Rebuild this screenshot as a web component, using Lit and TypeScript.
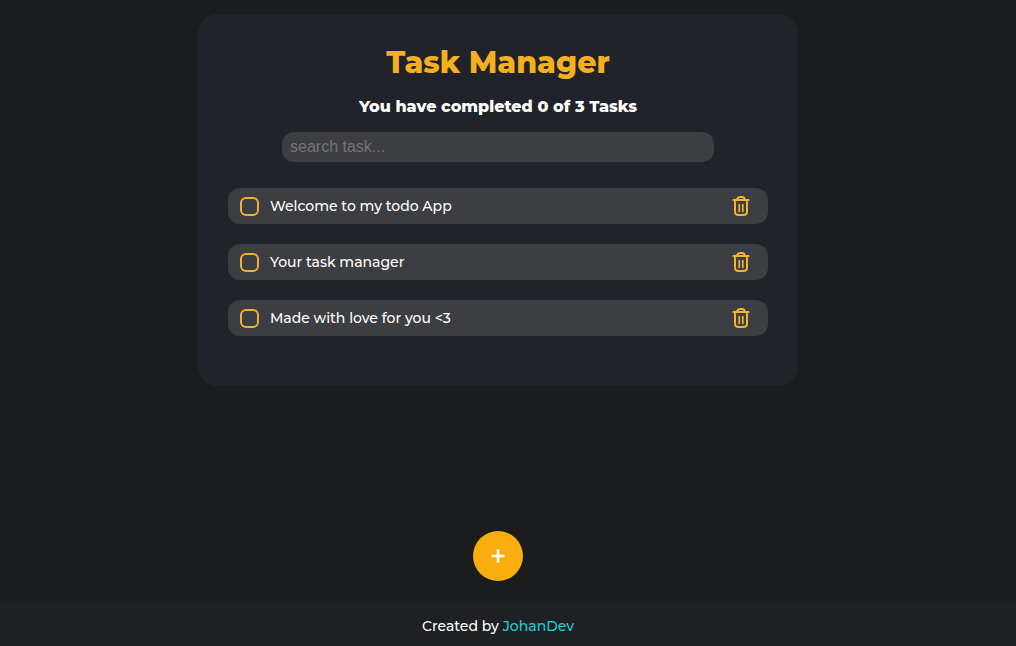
import { LitElement, html, css } from "lit";
import { customElement, property, state } from "lit/decorators.js";

interface Task {
  id: number;
  text: string;
  done: boolean;
}

@customElement("task-item")
class TaskItem extends LitElement {
  @property({ attribute: false }) task!: Task;

  static styles = css`
    :host {
      display: block;
    }
    .row {
      display: flex;
      align-items: center;
      gap: 10px;
      min-height: 36px;
      box-sizing: border-box;
      padding: 0 16px 0 12px;
      border-radius: 12px;
      background: #3d3e42;
    }
    .label {
      display: flex;
      flex: 1;
      align-items: center;
      gap: 11px;
      font-size: 14px;
      line-height: 20px;
      font-weight: 500;
      color: #fff;
      cursor: pointer;
    }
    .check {
      appearance: none;
      flex: none;
      width: 19px;
      height: 19px;
      margin: 0;
      border: 2px solid #f0b032;
      border-radius: 6px;
      cursor: pointer;
    }
    .check:checked {
      background: #f0b032;
    }
    .remove {
      display: flex;
      padding: 0;
      border: 0;
      background: none;
      color: #f0b429;
      cursor: pointer;
    }
  `;

  private emit(name: string) {
    this.dispatchEvent(new CustomEvent(name, { detail: this.task.id }));
  }

  render() {
    return html`
      <div class="row">
        <label class="label">
          <input
            class="check"
            type="checkbox"
            .checked=${this.task.done}
            @change=${() => this.emit("toggle-task")}
          />
          ${this.task.text}
        </label>
        <button class="remove" type="button" aria-label="Delete ${this.task.text}" @click=${() => this.emit("remove-task")}>
          <svg width="22" height="22" viewBox="0 0 22 22" fill="none" stroke="currentColor" stroke-width="2" stroke-linecap="round" stroke-linejoin="round">
            <path d="M3.5 5h15" />
            <path d="M7.300 5Q7.300 2 10 2h2Q14.700 2 14.700 5" />
            <path d="M5 5.500V16.500Q5 20 8.500 20h5Q17 20 17 16.500V5.500" />
            <path d="M9.200 9.500v7M12.800 9.500v7" stroke-width="1.700" />
          </svg>
        </button>
      </div>
    `;
  }
}

@customElement("app-root")
class AppRoot extends LitElement {
  @state() private tasks: Task[] = [
    { id: 1, text: "Welcome to my todo App", done: false },
    { id: 2, text: "Your task manager", done: false },
    { id: 3, text: "Made with love for you <3", done: false },
  ];
  @state() private query = "";

  static styles = css`
    :host {
      display: flex;
      flex-direction: column;
      min-height: 100vh;
      background: #1b1c1d;
      color: #fff;
      font-family: Montserrat, Inter, sans-serif;
    }
    .main {
      display: flex;
      flex: 1;
      flex-direction: column;
      align-items: center;
      padding: 14px 20px 20px 0;
    }
    .card {
      display: flex;
      flex-direction: column;
      align-items: center;
      box-sizing: border-box;
      width: 100%;
      max-width: 600px;
      padding: 30px 30px 50px;
      border-radius: 20px;
      background: #20232a;
    }
    .title {
      margin: 0;
      font-size: 30px;
      line-height: 38px;
      font-weight: 800;
      color: #f4b01e;
    }
    .summary {
      margin: 15px 0;
      font-size: 16px;
      line-height: 20px;
      font-weight: 800;
    }
    .search {
      box-sizing: border-box;
      width: 80%;
      height: 30px;
      padding: 0 8px;
      border: 0;
      border-radius: 12px;
      outline: none;
      background: #3d3e42;
      color: #fff;
      font: 16px "Liberation Sans", Arial, sans-serif;
    }
    .search::placeholder {
      color: #757575;
    }
    .list {
      display: grid;
      gap: 20px;
      width: 100%;
      margin: 26px 0 0;
      padding: 0;
      list-style: none;
    }
    .add {
      display: flex;
      align-items: center;
      justify-content: center;
      width: 50px;
      height: 50px;
      margin-top: auto;
      padding: 0;
      border: 0;
      border-radius: 50%;
      background: #f9ae0d;
      color: #fff;
      cursor: pointer;
    }
    .footer {
      padding: 15px 20px 10px 0;
      background: #1e2023;
      font-size: 14px;
      line-height: 20px;
      font-weight: 500;
      text-align: center;
    }
    .link {
      color: #1fced3;
      text-decoration: none;
    }
  `;

  private toggle(id: number) {
    this.tasks = this.tasks.map((t) => (t.id === id ? { ...t, done: !t.done } : t));
  }

  private remove(id: number) {
    this.tasks = this.tasks.filter((t) => t.id !== id);
  }

  private add() {
    const text = window.prompt("New task")?.trim();
    if (text) this.tasks = [...this.tasks, { id: Date.now(), text, done: false }];
  }

  render() {
    const done = this.tasks.filter((t) => t.done).length;
    const shown = this.tasks.filter((t) => t.text.toLowerCase().includes(this.query.toLowerCase()));
    return html`
      <main class="main">
        <section class="card">
          <h1 class="title">Task Manager</h1>
          <p class="summary">You have completed ${done} of ${this.tasks.length} Tasks</p>
          <input
            class="search"
            type="text"
            aria-label="Search task"
            placeholder="search task..."
            .value=${this.query}
            @input=${(e: InputEvent) => (this.query = (e.target as HTMLInputElement).value)}
          />
          <ul class="list">
            ${shown.map(
              (t) => html`<li>
                <task-item
                  .task=${t}
                  @toggle-task=${() => this.toggle(t.id)}
                  @remove-task=${() => this.remove(t.id)}
                ></task-item>
              </li>`
            )}
          </ul>
        </section>
        <button class="add" type="button" aria-label="Add task" @click=${this.add}>
          <svg width="14" height="14" viewBox="0 0 14 14" stroke="currentColor" stroke-width="2.500">
            <path d="M7 0.500v13M0.500 7h13" />
          </svg>
        </button>
      </main>
      <footer class="footer">Created by <a class="link" href="#">JohanDev</a></footer>
    `;
  }
}
